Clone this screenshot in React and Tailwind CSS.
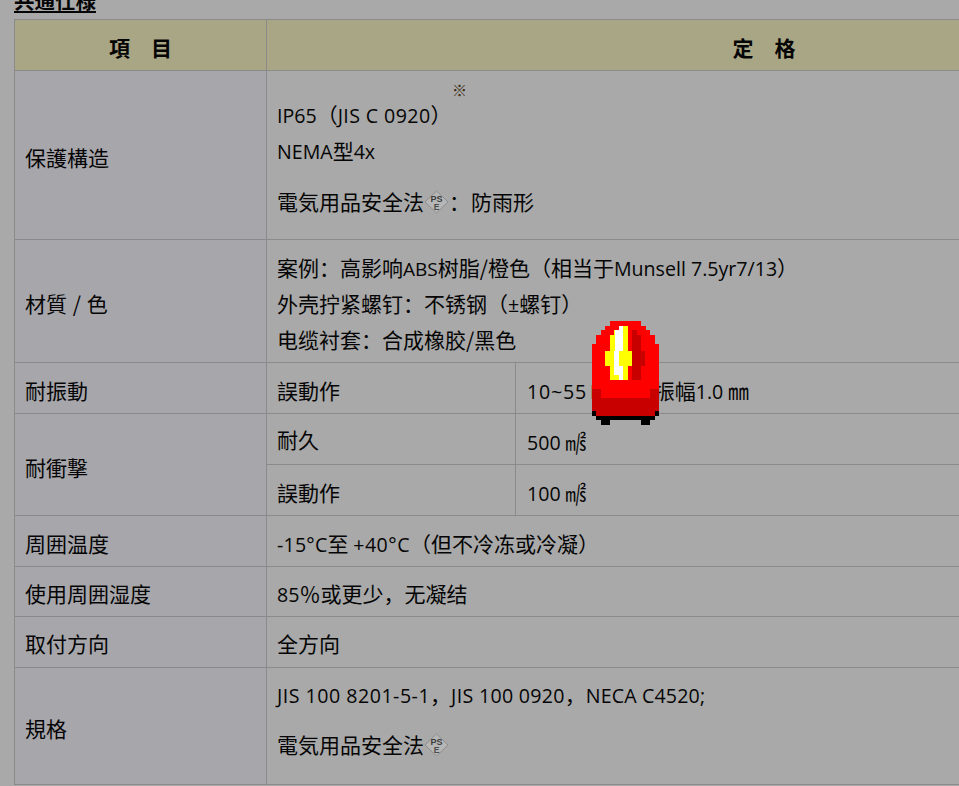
const base = "border border-[#8a8a8a] pr-[10px] align-middle font-normal text-left";
const c6 = base + " pl-[10px] pt-[6px] pb-0";
const c4 = base + " pl-[10px] pt-[4px] pb-0";
const c2 = base + " pl-[10px] pt-[2px] pb-0";
const c3 = base + " pl-[11px] pt-[6px] pb-0";
const head = "border border-[#8a8a8a] px-[10px] pt-[6px] pb-0 align-middle text-center font-bold";
const first = base + " pl-[10px] pt-[6px] pb-0 bg-[#a7a6ab]";
const first4 = base + " pl-[10px] pt-[4px] pb-0 bg-[#a7a6ab]";

function L({ children, className = "" }) {
  return <span className={"font-['Open_Sans',sans-serif] text-[19.6px] leading-none " + className}>{children}</span>;
}

function Pse() {
  return (
    <svg width="25" height="24" viewBox="0 0 25 24" className="inline-block align-[-4px]">
      <path d="M12.5 1 L24 12 L12.5 23 L1 12 Z" fill="#b6b6b6" stroke="#8e8e8e" strokeWidth="1" />
      <text x="12.5" y="11.5" textAnchor="middle" fontSize="9" fontWeight="700" fill="#3c3c3c" fontFamily="Liberation Sans, sans-serif">PS</text>
      <text x="12.5" y="19.5" textAnchor="middle" fontSize="8.5" fontWeight="700" fill="#4c4c4c" fontFamily="Liberation Sans, sans-serif">E</text>
    </svg>
  );
}

function Lamp() {
  return (
    <svg width="67" height="104" viewBox="0 0 67 104" className="absolute left-[592px] top-[321px]" shapeRendering="crispEdges">
      <path d="M18 0H49V5H54V9H58V14H63V23H67V77H0V23H4V14H9V9H13V5H18Z" fill="#ff0000" />
      <path d="M27 5H36V30H40V45H36V59H18V45H13V30H18V14H22V9H27Z" fill="#ffff00" />
      <path d="M27 5H31V30H27V45H31V59H27V54H22V30H23V9H27Z" fill="#ffffff" />
      <path d="M40 9H45V14H49V30H53V45H49V59H40Z" fill="#c80000" />
      <path d="M0 68H9V77H58V68H67V90H63V95H4V90H0Z" fill="#c80000" />
      <path d="M0 90H4V95H63V90H67V95H63V99H58V104H49V99H18V104H9V99H4V95H0Z" fill="#000000" />
    </svg>
  );
}

export default function App() {
  return (
    <div className="relative h-[786px] w-[959px] overflow-hidden bg-[#a9a9a9] text-[#050505] font-['Noto_Sans_CJK_SC','Open_Sans',sans-serif] text-[21px]">
      <div className="h-[19px] overflow-hidden pl-[14px]">
        <div className="mt-[-15px] text-[20.5px] font-bold underline leading-[30px]">共通仕様</div>
      </div>
      <table className="ml-[14px] w-[1248px] table-fixed border-collapse">
        <colgroup>
          <col className="w-[252px]" />
          <col className="w-[249px]" />
          <col />
        </colgroup>
        <tbody>
          <tr className="h-[51px] bg-[#a9a685]">
            <th className={head}>項　目</th>
            <th colSpan={2} className={head}>定　格</th>
          </tr>
          <tr className="h-[169px]">
            <td className={first}>保護構造</td>
            <td colSpan={2} className={c4}>
              <div className="relative leading-[36px]">
                <span className="absolute left-[175px] top-[-24px] text-[15px] text-[#3a2a10]">※</span>
                <div><L>IP65</L>（<L className="tracking-[0.4px]">JIS C 0920</L>）</div>
                <div><L>NEMA</L>型<L>4x</L></div>
                <div className="mt-[15px]">電気用品安全法<Pse />：<span className="ml-[1px]">防雨形</span></div>
              </div>
            </td>
          </tr>
          <tr className="h-[123px]">
            <td className={first}>材質<span className="mx-[1px]"> / </span>色</td>
            <td colSpan={2} className={c4}>
              <div className="leading-[36px]">
                <div>案例：高影响<L className="text-[19px]">ABS</L>树脂/橙色（相当于<L className="text-[19.2px]">Munsell 7.5yr7/13</L>）</div>
                <div>外壳拧紧螺钉：不锈钢（<L>±</L>螺钉）</div>
                <div>电缆衬套：合成橡胶/黑色</div>
              </div>
            </td>
          </tr>
          <tr className="h-[51px]">
            <td className={first}>耐振動</td>
            <td className={c6}>誤動作</td>
            <td className={c3}><L className="tracking-[0.8px]">10~55</L><L className="ml-[3px]">Hz</L>，全<span className="-ml-[2px]">振幅</span><L>1.0</L> ㎜</td>
          </tr>
          <tr className="h-[51px]">
            <td rowSpan={2} className={first}>耐衝撃</td>
            <td className={c2}>耐久</td>
            <td className={c3}><L>500</L> ㎨</td>
          </tr>
          <tr className="h-[51px]">
            <td className={c6}>誤動作</td>
            <td className={c3}><L>100</L> ㎨</td>
          </tr>
          <tr className="h-[51px]">
            <td className={first}>周囲温度</td>
            <td colSpan={2} className={c6}><L className="tracking-[0.2px]">-15°C</L>至 <L className="tracking-[0.5px]">+40°C</L>（但不冷冻或冷凝）</td>
          </tr>
          <tr className="h-[50px]">
            <td className={first4}>使用周囲湿度</td>
            <td colSpan={2} className={c4}><L>85</L>％或更少，无凝结</td>
          </tr>
          <tr className="h-[51px]">
            <td className={first4}>取付方向</td>
            <td colSpan={2} className={c4}>全方向</td>
          </tr>
          <tr className="h-[117px]">
            <td className={first}>規格</td>
            <td colSpan={2} className={base + " pl-[10px] pt-0 pb-[14px]"}>
              <div className="leading-[36px]"><L className="tracking-[0.5px]">JIS 100 8201-5-1</L>，<L className="tracking-[0.3px]">JIS 100 0920</L>，<L className="tracking-[0.15px]">NECA C4520;</L></div>
              <div className="mt-[14px] leading-[36px]">電気用品安全法<Pse /></div>
            </td>
          </tr>
        </tbody>
      </table>
      <Lamp />
    </div>
  );
}
